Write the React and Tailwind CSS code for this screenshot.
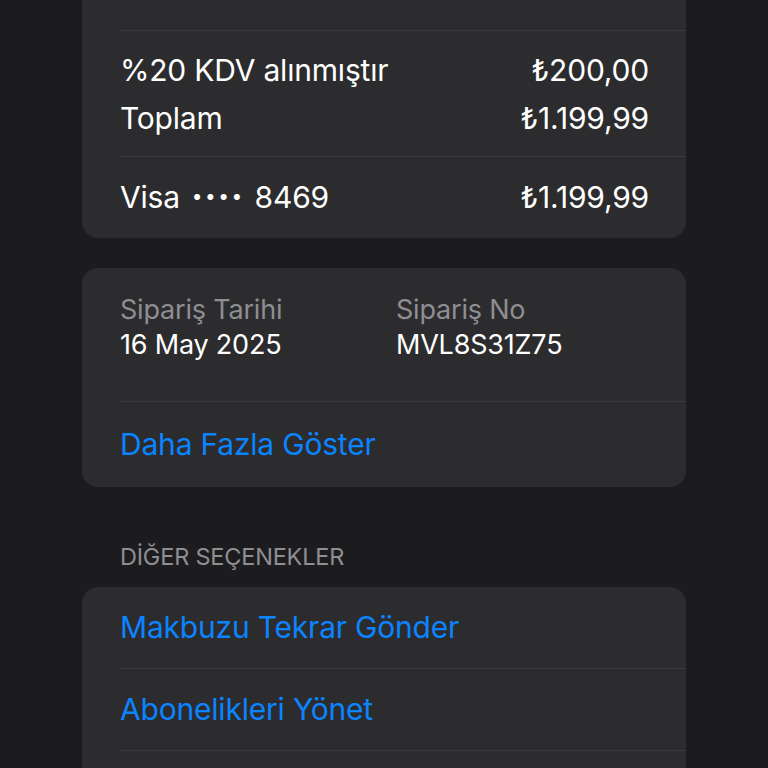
import React from "react";

const font = { fontFamily: "Inter, 'Noto Sans', sans-serif" };

function Divider() {
  return <div className="h-px bg-[#3a3a3d] ml-[38px]" />;
}

function AmountRow({ label, amount }) {
  return (
    <div className="flex items-center justify-between h-[48px] pl-[38px] pr-[37px] text-[30px] text-white">
      <span>{label}</span>
      <span>{amount}</span>
    </div>
  );
}

function LinkRow({ children, tall = false }) {
  return (
    <div className={`flex items-center pl-[38px] text-[30px] text-[#0a84ff] ${tall ? "h-[85px]" : "h-[81px]"}`}>
      {children}
    </div>
  );
}

export default function App() {
  return (
    <div className="h-[768px] overflow-hidden bg-[#1c1c1e] px-[82px] tracking-[-0.2px]" style={font}>
      <div className="bg-[#2c2c2e] rounded-b-[16px] pt-[30px]">
        <Divider />
        <div className="pt-[15px] pb-[14px]">
          <AmountRow label="%20 KDV alınmıştır" amount="₺200,00" />
          <AmountRow label="Toplam" amount="₺1.199,99" />
        </div>
        <Divider />
        <div className="flex items-center justify-between h-[81px] pl-[38px] pr-[37px] text-[30px] text-white">
          <span className="flex items-center">
            Visa
            <span className="text-[19px] tracking-[2.5px] ml-[12px] mr-[10px]">••••</span>
            8469
          </span>
          <span>₺1.199,99</span>
        </div>
      </div>

      <div className="bg-[#2c2c2e] rounded-[16px] mt-[30px]">
        <div className="grid grid-cols-[276px_1fr] pl-[38px] pt-[24px] pb-[39px] text-[27px] leading-[35px]">
          <div>
            <div className="text-[#8e8e93]">Sipariş Tarihi</div>
            <div className="text-white">16 May 2025</div>
          </div>
          <div>
            <div className="text-[#8e8e93]">Sipariş No</div>
            <div className="text-white">MVL8S31Z75</div>
          </div>
        </div>
        <Divider />
        <LinkRow tall>Daha Fazla Göster</LinkRow>
      </div>

      <div className="pl-[38px] pt-[50px] pb-[10px] text-[23.5px] leading-[40px] text-[#8e8e93] uppercase">
        DİĞER SEÇENEKLER
      </div>

      <div className="bg-[#2c2c2e] rounded-t-[16px] h-[200px]">
        <LinkRow>Makbuzu Tekrar Gönder</LinkRow>
        <Divider />
        <LinkRow>Abonelikleri Yönet</LinkRow>
        <Divider />
      </div>
    </div>
  );
}
